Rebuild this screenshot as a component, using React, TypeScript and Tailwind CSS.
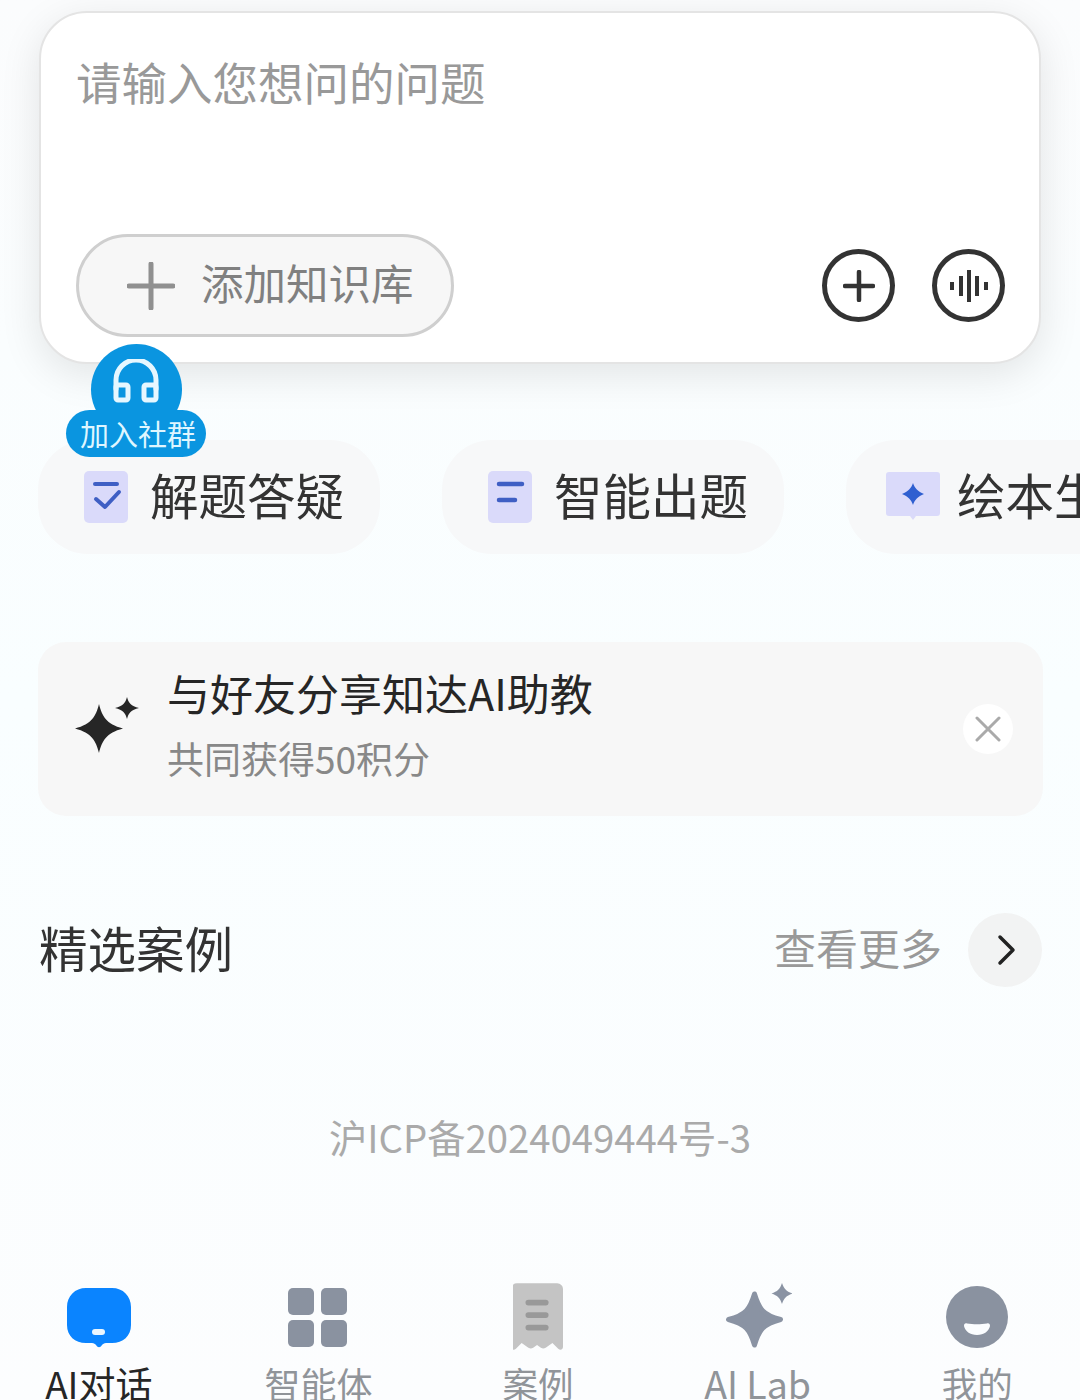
const cjk = "font-['Noto_Sans_CJK_SC','Noto_Sans',sans-serif]";

function Headset() {
  return (
    <svg width="48" height="48" viewBox="0 0 48 48" fill="none" className="mt-[15px]">
      <path d="M4 30V21a20 20 0 0 1 40 0v9" stroke="#e6f7ff" strokeWidth="5" strokeLinecap="round" />
      <rect x="4" y="26" width="12" height="15" rx="2" stroke="#e6f7ff" strokeWidth="5" />
      <rect x="32" y="26" width="12" height="15" rx="2" stroke="#e6f7ff" strokeWidth="5" />
    </svg>
  );
}

function ChipIcon({ kind }: { kind: "check" | "lines" | "star" }) {
  if (kind === "star") {
    return (
      <svg width="54" height="50" viewBox="0 0 54 50" className="shrink-0">
        <path d="M3 0h48a3 3 0 0 1 3 3v38a3 3 0 0 1-3 3H30l-3 4-3-4H3a3 3 0 0 1-3-3V3a3 3 0 0 1 3-3z" fill="#dadafa" />
        <path d="M27 11c1.500 5 5 8.500 11 11-6 2.500-9.500 6-11 11-1.500-5-5-8.500-11-11 6-2.500 9.500-6 11-11z" fill="#2f5fd0" />
      </svg>
    );
  }
  return (
    <svg width="44" height="52" viewBox="0 0 44 52" className="shrink-0">
      <rect width="44" height="52" rx="5" fill="#dadafa" />
      {kind === "check" ? (
        <>
          <path d="M11 13h22" stroke="#3f5fc4" strokeWidth="4" strokeLinecap="round" />
          <path d="M12 28l9 8 14-15" stroke="#3f5fc4" strokeWidth="4" fill="none" strokeLinecap="round" strokeLinejoin="round" />
        </>
      ) : (
        <>
          <path d="M11 13h23" stroke="#3f5fc4" strokeWidth="4.500" strokeLinecap="round" />
          <path d="M11 29h16" stroke="#3f5fc4" strokeWidth="4.500" strokeLinecap="round" />
        </>
      )}
    </svg>
  );
}

function Sparkles() {
  return (
    <svg width="64" height="60" viewBox="0 0 64 60" className="shrink-0 -mt-[4px]">
      <path d="M24 7c3 12 7 20 24 24.500-17 4.500-21 12.500-24 24.500-3-12-7-20-24-24.500 17-4.500 21-12.500 24-24.500z" fill="#262626" />
      <path d="M52 0c1.500 6 4 9 12 11-8 2-10.500 5-12 11-1.500-6-4-9-12-11 8-2 10.500-5 12-11z" fill="#262626" />
    </svg>
  );
}

function ChatTab() {
  return (
    <svg width="64" height="60" viewBox="0 0 64 60" className="mt-[2px]">
      <path d="M19 0h26c11 0 19 8 19 19v18c0 11-8 18-19 18h-6c-2 0-3 1-4 2-2 3-4 3-6 0-1-1-2-2-4-2h-6C8 55 0 48 0 37V19C0 8 8 0 19 0z" fill="#0a84ff" />
      <rect x="25" y="41" width="13" height="6" rx="3" fill="#eaf6ff" />
    </svg>
  );
}

function GridTab() {
  return (
    <svg width="60" height="60" viewBox="0 0 60 60" fill="#8a92a0">
      <rect x="0" y="1" width="26" height="27" rx="5" />
      <rect x="33" y="1" width="26" height="27" rx="5" />
      <rect x="0" y="33" width="26" height="27" rx="5" />
      <rect x="33" y="33" width="26" height="27" rx="5" />
    </svg>
  );
}

function ReceiptTab() {
  return (
    <svg width="50" height="70" viewBox="0 0 52 70">
      <path d="M6 0h40a6 6 0 0 1 6 6v60c0 3-3 4-5 2l-6-6-7 5c-2 1-3 1-5 0l-4-3-4 3c-2 1-3 1-5 0l-7-5-6 6c-2 2-5 1-5-2V6a6 6 0 0 1 6-6z" fill="#c4c4c4" />
      <g fill="#999">
        <rect x="13" y="17" width="24" height="6" rx="3" />
        <rect x="13" y="30" width="24" height="6" rx="3" />
        <rect x="13" y="43" width="24" height="6" rx="3" />
      </g>
    </svg>
  );
}

function LabTab() {
  return (
    <svg width="68" height="68" viewBox="0 0 68 68" fill="#8a93a3">
      <path d="M30.500 11C35 26 39 32 56.500 36.500 39 41 35 47 30.500 62 26 47 22 41 4.500 36.500 22 32 26 26 30.500 11z" stroke="#8a93a3" strokeWidth="5" strokeLinejoin="round" />
      <path d="M58 0c2 6 4.500 8.500 10.500 10.500C62.500 12.500 60 15 58 21c-2-6-4.500-8.500-10.500-10.500C53.500 8.500 56 6 58 0z" />
    </svg>
  );
}

function MeTab() {
  return (
    <svg width="62" height="62" viewBox="0 0 62 62">
      <circle cx="31" cy="31" r="31" fill="#8a92a0" />
      <path d="M18 40c0-2 1-3 3-2.500 6 1 14 1 20 0 2-.5 3 .5 3 2.500-1 5-6 9-13 9s-12-4-13-9z" fill="#fbfdff" />
    </svg>
  );
}

const tabs = [
  { label: "AI对话", icon: <ChatTab />, cls: "text-[37px] text-[#262626]" },
  { label: "智能体", icon: <GridTab />, cls: "text-[36px] text-[#909499]" },
  { label: "案例", icon: <ReceiptTab />, cls: "text-[35.5px] text-[#909499]" },
  { label: "AI Lab", icon: <LabTab />, cls: "text-[37.5px] text-[#909499]" },
  { label: "我的", icon: <MeTab />, cls: "text-[35.5px] text-[#909499]" },
];

const chips: { label: string; kind: "check" | "lines" | "star"; cls: string; gap: string }[] = [
  { label: "解题答疑", kind: "check", cls: "pl-[46px]", gap: "ml-[22px]" },
  { label: "智能出题", kind: "lines", cls: "pl-[46px]", gap: "ml-[22px]" },
  { label: "绘本生成", kind: "star", cls: "pl-[40px]", gap: "ml-[17px]" },
];

export default function App() {
  return (
    <div className={`${cjk} w-[1080px] h-[1400px] overflow-hidden flex flex-col bg-gradient-to-b from-[#fbfcfd] via-[#f9feff] to-[#fcfdfe]`}>
      <div className="relative ml-[39px] mt-[11px] w-[1002px] h-[353px] shrink-0 rounded-[48px] border-2 border-[#e4e4e4] bg-white shadow-[0_10px_40px_rgba(0,0,0,0.10)] flex flex-col justify-between pl-[35px] pr-[34px] pt-[40px] pb-[25px]">
        <div className="text-[45.5px] leading-[56px] text-[#999999]">请输入您想问的问题</div>
        <div className="flex items-center justify-between">
          <div className="flex items-center w-[378px] h-[103px] rounded-full border-[3px] border-[#cfcfcf] bg-[#f7f7f7] pl-[48px]">
            <svg width="48" height="48" viewBox="0 0 48 48" className="shrink-0">
              <path d="M24 2v44M2 24h44" stroke="#909090" strokeWidth="5" strokeLinecap="round" />
            </svg>
            <span className="ml-[26px] pb-[6px] text-[42.5px] leading-none text-[#808080] whitespace-nowrap">添加知识库</span>
          </div>
          <div className="flex items-center gap-[37px]">
            <div className="w-[73px] h-[73px] rounded-full border-[5px] border-[#333333] flex items-center justify-center">
              <svg width="32" height="32" viewBox="0 0 32 32">
                <path d="M16 2v28M2 16h28" stroke="#333333" strokeWidth="4.500" strokeLinecap="round" />
              </svg>
            </div>
            <div className="w-[73px] h-[73px] rounded-full border-[5px] border-[#333333] flex items-center justify-center">
              <svg width="38" height="32" viewBox="0 0 38 32" stroke="#333333" strokeWidth="4">
                <path d="M2 12v8M11 6v20M19 0v32M27 6v20M36 12v8" />
              </svg>
            </div>
          </div>
        </div>
        <div className="absolute left-[25px] top-[331px] z-10 w-[140px] h-[115px] flex flex-col items-center">
          <div className="w-[91px] h-[91px] rounded-full bg-[#0a95e0] flex justify-center">
            <Headset />
          </div>
          <div className="-mt-[25px] w-[140px] h-[47px] pl-[4px] rounded-full bg-[#0a95e0] text-[#dff6ff] text-[29px] leading-[47px] text-center whitespace-nowrap">加入社群</div>
        </div>
      </div>

      <div className="flex gap-[62px] ml-[38px] mt-[76px] w-[1200px] shrink-0">
        {chips.map((c) => (
          <div key={c.label} className={`flex items-center w-[342px] h-[114px] shrink-0 rounded-[50px] bg-[#f7f8f9] ${c.cls}`}>
            <ChipIcon kind={c.kind} />
            <span className={`${c.gap} pb-[6px] text-[48.5px] leading-none text-[#333333] whitespace-nowrap`}>{c.label}</span>
          </div>
        ))}
      </div>

      <div className="ml-[38px] mt-[88px] w-[1005px] h-[174px] shrink-0 rounded-[28px] bg-[#f7f7f7] flex items-center pl-[37px] pr-[30px]">
        <Sparkles />
        <div className="ml-[28px] pb-[11px] flex-1 flex flex-col">
          <div className="text-[43px] leading-[56px] text-[#262626] whitespace-nowrap">与好友分享知达AI助教</div>
          <div className="mt-[13px] text-[37px] leading-[50px] text-[#888888] whitespace-nowrap">共同获得50积分</div>
        </div>
        <div className="w-[50px] h-[50px] rounded-full bg-white flex items-center justify-center">
          <svg width="26" height="26" viewBox="0 0 26 26">
            <path d="M2 2l22 22M24 2L2 24" stroke="#aaaaaa" strokeWidth="3" strokeLinecap="round" />
          </svg>
        </div>
      </div>

      <div className="ml-[39px] mt-[97px] w-[1003px] h-[74px] shrink-0 flex items-center justify-between">
        <div className="pb-[6px] text-[48.5px] leading-none text-[#333333]">精选案例</div>
        <div className="flex items-center gap-[26px]">
          <span className="pb-[6px] text-[42px] leading-none text-[#999999]">查看更多</span>
          <div className="w-[74px] h-[74px] rounded-full bg-[#f2f3f3] flex items-center justify-center">
            <svg width="20" height="32" viewBox="0 0 20 32" fill="none" className="ml-[3px]">
              <path d="M3 3l13 13L3 29" stroke="#222222" strokeWidth="3.500" strokeLinecap="round" strokeLinejoin="round" />
            </svg>
          </div>
        </div>
      </div>

      <div className="mt-[125px] h-[50px] shrink-0 text-center text-[38.3px] leading-[50px] text-[#aaaaaa]">沪ICP备2024049444号-3</div>

      <div className="mt-[119px] -ml-[11px] w-[1098px] shrink-0 grid grid-cols-5">
        {tabs.map((t) => (
          <div key={t.label} className="flex flex-col items-center">
            <div className="h-[72px] flex items-center justify-center">{t.icon}</div>
            <div className={`mt-[5px] leading-[50px] whitespace-nowrap ${t.cls}`}>{t.label}</div>
          </div>
        ))}
      </div>
    </div>
  );
}
